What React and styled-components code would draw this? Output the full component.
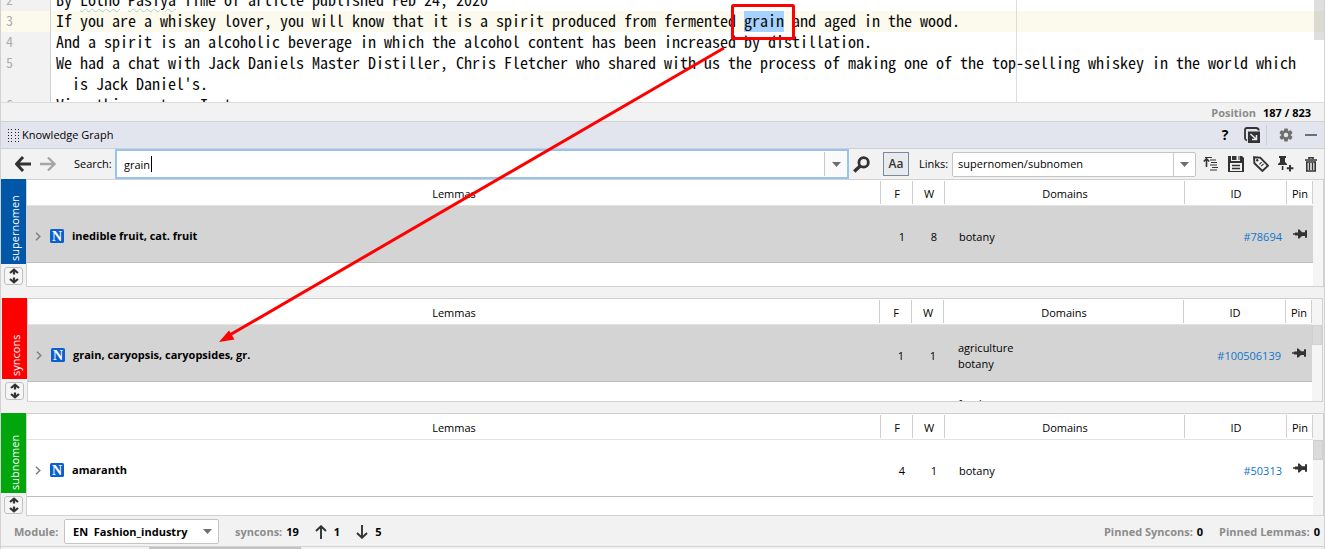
import React from "react";
import styled, { createGlobalStyle } from "styled-components";

const UI_FONT = '"Open Sans", "Noto Sans", sans-serif';
const MONO_FONT = '"Noto Sans Mono CJK SC", "Noto Sans Mono CJK JP", "DejaVu Sans Mono", monospace';
const LINE = "#d1d1d1";
const PANEL = "#f2f2f2";
const INK = "#333333";

const GlobalStyle = createGlobalStyle`
  * { box-sizing: border-box; }
  body {
    margin: 0;
    background: ${PANEL};
    color: #000;
    font: 11px/16px ${UI_FONT};
    overflow: hidden;
  }
  button, input, select { font: inherit; color: inherit; margin: 0; }
  svg { display: block; flex: none; }
`;

const Window = styled.main`
  position: relative;
  border: solid ${LINE};
  border-width: 0 1px;
`;

/* ---------- editor ---------- */

const Editor = styled.section`
  display: flex;
  height: 103px;
  overflow: hidden;
  background: #fff;
  border-bottom: 1px solid #dcdcdc;
  font: 16px/19px ${MONO_FONT};
`;

const Lines = styled.div`
  flex: 1;
  margin-top: -10px;
  min-width: 0;
`;

const Line = styled.div`
  display: flex;
  height: 21px;
  background: ${(p) => (p.$current ? "#fcfaed" : "transparent")};
`;

const LineNumber = styled.span`
  width: 50px;
  flex: none;
  padding-left: 5px;
  font-size: 14px;
  color: #adadad;
  background: ${(p) => (p.$current ? "transparent" : PANEL)};
  border-right: 1px solid ${LINE};
`;

const Code = styled.span`
  flex: 1;
  padding-left: ${(p) => (p.$wrapped ? 21 : 5)}px;
  white-space: pre;
  color: #080808;
`;

const Typo = styled.span`
  text-decoration: underline wavy #a9d3ae 1px;
  text-underline-offset: 2px;
`;

const Selected = styled.mark`
  display: inline-block;
  height: 21px;
  color: inherit;
  background: #a6d2ff;
`;

const MarginGuide = styled.div`
  position: absolute;
  left: 1015px;
  top: 0;
  width: 1px;
  height: 102px;
  background: #dcdcdc;
`;

const EditorScroll = styled.div`
  position: absolute;
  right: 0;
  top: 0;
  width: 10px;
  height: 40px;
  background: rgba(120, 120, 120, 0.24);
`;

const PositionBar = styled.div`
  display: flex;
  justify-content: flex-end;
  align-items: flex-end;
  gap: 7px;
  height: 18px;
  padding-right: 13px;
  font-weight: 700;
`;

const Muted = styled.span`
  color: #8c8c8c;
`;

/* ---------- tool window ---------- */

const TitleBar = styled.header`
  display: flex;
  align-items: center;
  height: 28px;
  padding: 0 7px;
  background: #e2e5ed;
  border: solid ${LINE};
  border-width: 1px 0;
`;

const Title = styled.h1`
  flex: 1;
  margin: 0 0 0 3px;
  font: inherit;
`;

const IconButton = styled.button`
  display: flex;
  align-items: center;
  justify-content: center;
  width: ${(p) => p.$w || 16}px;
  height: 20px;
  padding: 0;
  border: 0;
  background: none;
  font-weight: 700;
  font-size: 14px;
`;

const TitleActions = styled.div`
  display: flex;
  align-items: center;
  gap: 11px;
`;

const Divider = styled.span`
  width: 1px;
  height: 20px;
  margin-left: -5px;
  background: #cdcfd6;
`;

const Toolbar = styled.div`
  display: flex;
  align-items: center;
  height: 30px;
  padding: 0 5px 0 14px;
`;

const NavButtons = styled.div`
  display: flex;
  gap: 9px;
  margin-right: 18px;
`;

const FieldLabel = styled.label`
  width: ${(p) => p.$w}px;
  flex: none;
  white-space: nowrap;
  color: ${(p) => (p.$muted ? "#8c8c8c" : "inherit")};
`;

const SearchBox = styled.div`
  position: relative;
  display: flex;
  align-items: center;
  flex: 1;
  height: 30px;
  background: #fff;
  border: 2px solid #97c3f3;
`;

const SearchInput = styled.input`
  flex: 1;
  min-width: 0;
  height: 24px;
  padding: 0 7px;
  border: 0;
  outline: 0;
  background: none;
`;

const Caret = styled.span`
  position: absolute;
  left: 34px;
  top: 5px;
  width: 1px;
  height: 16px;
  background: #000;
`;

const DropButton = styled.button`
  display: flex;
  align-items: center;
  justify-content: center;
  width: 23px;
  height: 24px;
  padding: 0;
  border: 0;
  border-left: 1px solid #c9c9c9;
  background: #fafafa;
`;

const CaseButton = styled.button`
  width: 26px;
  height: 24px;
  margin: 0 10px 0 14px;
  padding: 0;
  border: 1px solid #7a8a9c;
  background: #e8ebee;
  color: #333;
  font-size: 12px;
  font-weight: 600;
  line-height: 20px;
`;

const SelectWrap = styled.div`
  position: relative;
  flex: none;
  width: ${(p) => p.$w}px;
  height: 25px;
  background: #fff;
  border: 1px solid #c4c4c4;
  border-radius: 2px;
`;

const Select = styled.select`
  appearance: none;
  width: 100%;
  height: 100%;
  padding: 0 26px 0 ${(p) => (p.$bold ? 8 : 5)}px;
  border: 0;
  outline: 0;
  background: transparent;
  font-weight: ${(p) => (p.$bold ? 700 : 400)};
`;

const SelectArrow = styled.span`
  position: absolute;
  right: 0;
  top: 0;
  display: flex;
  align-items: center;
  justify-content: center;
  width: 22px;
  height: 100%;
  pointer-events: none;
  border-left: ${(p) => (p.$divided ? "1px solid #c9c9c9" : "0")};
`;

const Actions = styled.div`
  display: flex;
  gap: 9px;
  margin-left: ${(p) => p.$ml || 7}px;
`;

/* ---------- result groups ---------- */

const Group = styled.section`
  display: flex;
  height: ${(p) => p.$h}px;
  margin: 0 ${(p) => (p.$inset ? 1 : 0)}px 11px;

  &:last-of-type { margin-bottom: 0; }
`;

const Side = styled.div`
  display: flex;
  flex-direction: column;
  align-items: center;
  gap: 3px;
  width: 25px;
  padding-bottom: 2px;
`;

const GroupName = styled.h2`
  flex: 1;
  width: 25px;
  margin: 0;
  padding: 3px 5px 0 0;
  background: ${(p) => p.$color};
  color: #fff;
  font: 11px/18px ${UI_FONT};
  writing-mode: vertical-rl;
  transform: rotate(180deg);
`;

const ExpandButton = styled.button`
  display: flex;
  align-items: center;
  justify-content: center;
  width: 19px;
  height: 18px;
  padding: 0;
  border: 1px solid #c0c0c0;
  border-radius: 3px;
  background: #f5f5f5;
`;

const Frame = styled.div`
  display: flex;
  flex: 1;
  min-width: 0;
  overflow: hidden;
  background: #fff;
  border: 1px solid ${LINE};
`;

const Table = styled.table`
  flex: 1;
  width: 100%;
  height: 0;
  table-layout: fixed;
  border-collapse: separate;
  border-spacing: 0;
`;

const HeadRow = styled.tr`
  height: 26px;
`;

const Head = styled.th`
  padding: 2px 0 0;
  border-bottom: 1px solid #e2e2e2;
  background: linear-gradient(#cfcfcf, #cfcfcf) right top 1px / 1px 23px no-repeat;
  font-weight: 400;
`;

const Row = styled.tr`
  height: 57px;
  background: ${(p) => (p.$selected ? "#d4d4d4" : "#fff")};
`;

const Cell = styled.td`
  padding: ${(p) => p.$pad || "6px 8px 0 0"};
  text-align: ${(p) => p.$align || "right"};
  border-bottom: 1px solid #bdbdbd;
  vertical-align: middle;
`;

const Lemma = styled.div`
  display: flex;
  align-items: center;
  font-weight: 700;
`;

const BadgeSlot = styled.span`
  margin: 0 8px 0 9px;
`;

const IdLink = styled.a`
  color: #0f75c8;
  text-decoration: none;
`;

const Track = styled.div`
  width: 10px;
  flex: none;
  padding-top: 26px;
  background: #f5f5f5;
`;

const Thumb = styled.div`
  height: 20px;
  background: #dadada;
  border: 1px solid #d0d0d0;
`;

/* ---------- footer ---------- */

const Footer = styled.footer`
  display: flex;
  align-items: center;
  height: 31px;
  padding: 1px 4px 0 13px;
  border-bottom: 1px solid ${LINE};
  font-weight: 700;
`;

const Stat = styled.span`
  display: flex;
  align-items: center;
  gap: ${(p) => p.$gap || 4}px;
  margin-left: 16px;
`;

const Spacer = styled.span`
  flex: 1;
`;

const BottomScroll = styled.div`
  width: 152px;
  height: 3px;
  margin-left: 148px;
  background: #c2c2c2;
`;

const Annotation = styled.svg`
  position: absolute;
  left: -1px;
  top: 0;
  pointer-events: none;
`;

/* ---------- icons ---------- */

const BackArrow = () => (
  <svg width="16" height="16" fill="none" stroke={INK} strokeWidth="3">
    <path d="M16 8H2M8 1L1.5 8L8 15" />
  </svg>
);

const ForwardArrow = () => (
  <svg width="16" height="16" fill="none" stroke="#a6a6a6" strokeWidth="2.4">
    <path d="M0 8H14M8 1.5L14.5 8L8 14.5" />
  </svg>
);

const Triangle = () => (
  <svg width="9" height="5">
    <path d="M0 0H9L4.5 5Z" fill="#6e6e6e" />
  </svg>
);

const Grip = () => (
  <svg width="11" height="13" stroke="#222" strokeWidth="1" strokeDasharray="1 2">
    <path d="M.5 0V13M3.5 0V13M7.5 0V13M10.5 0V13" />
  </svg>
);

const Magnifier = () => (
  <svg width="17" height="17" fill="none" stroke={INK}>
    <circle cx="10.6" cy="6.4" r="4.7" strokeWidth="2.8" />
    <path d="M7.2 10L1.2 15.6" strokeWidth="3.4" />
  </svg>
);

const PopOut = () => (
  <svg width="16" height="16" fill="none">
    <path d="M3 13.5Q1 13 1 11V3Q1 1 3 1H12Q14.5 1 14.8 3.5" stroke={INK} strokeWidth="1.8" />
    <path d="M4 4.5H16V16H4Z" fill={INK} />
    <path d="M6.5 7L12 12M12.5 8V12.5H8" stroke="#e8eaf0" strokeWidth="1.5" />
  </svg>
);

const Gear = () => (
  <svg width="14" height="14" viewBox="-7 -7 14 14">
    <circle r="3.5" fill="none" stroke="#6e6e6e" strokeWidth="2.4" />
    {[0, 60, 120, 180, 240, 300].map((a) => (
      <path key={a} d="M-1.6 -6.6H1.6L2.2 -4H-2.2Z" fill="#6e6e6e" transform={`rotate(${a})`} />
    ))}
  </svg>
);

const Minus = () => (
  <svg width="12" height="2">
    <path d="M0 0H12V2H0Z" fill="#6e6e6e" />
  </svg>
);

const SortTree = () => (
  <svg width="16" height="14" fill="none" stroke={INK}>
    <path d="M3.5 10V2M.8 4.5L3.5 1.6L6.2 4.5" strokeWidth="1.6" />
    <path d="M2 .5H9M7 3H13M8 5.5H14M7 8H14M9 10.5H15M7 13H14" strokeWidth="1.1" />
  </svg>
);

const Save = () => (
  <svg width="16" height="16">
    <path d="M0 0H3V5H12V0H14L16 2V16H0Z" fill={INK} />
    <path d="M4 0H8.5V4H4ZM10.5 0H11.5V4H10.5Z" fill={INK} />
    <path d="M2 7H14V15H2Z" fill="#f2f2f2" />
    <path d="M4 9.5H12M4 12.5H12" stroke={INK} strokeWidth="1.4" />
  </svg>
);

const Tag = () => (
  <svg width="16" height="16" fill="none" stroke={INK}>
    <path d="M1 1.2L7.2 1.6L15 9.6L9.4 15L1.4 7.2Z" strokeWidth="1.9" />
    <circle cx="4.2" cy="4.2" r="1.2" fill={INK} stroke="none" />
    <path d="M6.4 8.4L8.6 6.2M8.2 10.2L10.6 7.8" strokeWidth="1.1" />
  </svg>
);

const PinAdd = () => (
  <svg width="16" height="16">
    <path d="M1 0H8V2H7V6L9 8V9H0V8L2 6V2H1ZM3.8 10H5.4V14H3.8Z" fill={INK} />
    <path d="M11 9H13V11.2H15.4V13.2H13V15.6H11V13.2H8.8V11.2H11Z" fill={INK} />
  </svg>
);

const Trash = () => (
  <svg width="12" height="15" fill="none" stroke={INK}>
    <path d="M4 2V.8H8V2M0 3H12" strokeWidth="1.6" />
    <path d="M1.8 5V14H10.2V5Z" strokeWidth="1.6" />
    <path d="M4.5 6V13M7.5 6V13" strokeWidth="1.4" />
  </svg>
);

const UpDown = () => (
  <svg width="10" height="16" fill="none" stroke={INK} strokeWidth="2.2">
    <path d="M5 1.5V6.5M1 5L5 1.6L9 5M5 9.5V14.5M1 11L5 14.4L9 11" />
  </svg>
);

const Chevron = () => (
  <svg width="6" height="9" fill="none" stroke="#7f7f7f" strokeWidth="1.5">
    <path d="M1 .8L4.8 4.5L1 8.2" />
  </svg>
);

const NounBadge = () => (
  <svg width="14" height="14">
    <rect width="14" height="14" rx="1.5" fill="#0b5fcf" />
    <text x="7" y="12" textAnchor="middle" fill="#fff" fontFamily="Liberation Serif, serif" fontWeight="700" fontSize="14">N</text>
  </svg>
);

const Pin = () => (
  <svg width="14" height="10">
    <path d="M0 4.3H5V5.7H0ZM2 3.5H5V6.5H2ZM5 .5H6.4L9 3.2H12V1.2H14V8.8H12V7H9L6.4 9.5H5Z" fill={INK} />
  </svg>
);

const StatArrow = ({ down }) => (
  <svg width="12" height="14" fill="none" stroke={INK} strokeWidth="1.9">
    <path d={down ? "M6 0V13M1 8L6 12.8L11 8" : "M6 14V1M1 6L6 1.2L11 6"} />
  </svg>
);

/* ---------- data ---------- */

const CODE = [
  { n: 2, text: <>By <Typo>Lotho</Typo> <Typo>Pasiya</Typo> Time of article published Feb 24, 2020</> },
  {
    n: 3,
    current: true,
    text: <>If you are a whiskey lover, you will know that it is a spirit produced from fermented <Selected>grain</Selected> and aged in the wood.</>,
  },
  { n: 4, text: "And a spirit is an alcoholic beverage in which the alcohol content has been increased by distillation." },
  { n: 5, text: "We had a chat with Jack Daniels Master Distiller, Chris Fletcher who shared with us the process of making one of the top-selling whiskey in the world which" },
  { wrapped: true, text: "is Jack Daniel's." },
  { n: 6, text: "View this post on Instagram" },
];

const GROUPS = [
  {
    name: "supernomen", color: "#0056a7", height: 108,
    row: { lemma: "inedible fruit, cat. fruit", f: 1, w: 8, domains: ["botany"], id: "#78694", selected: true },
  },
  {
    name: "syncons", color: "#ff0000", height: 104, inset: true, thumb: true, next: "food",
    row: { lemma: "grain, caryopsis, caryopsides, gr.", f: 1, w: 1, domains: ["agriculture", "botany"], id: "#100506139", selected: true },
  },
  {
    name: "subnomen", color: "#00a60c", height: 103, thumb: true,
    row: { lemma: "amaranth", f: 4, w: 1, domains: ["botany"], id: "#50313" },
  },
];

function ResultGroup({ name, color, height, inset, thumb, next, row }) {
  return (
    <Group $h={height} $inset={inset}>
      <Side>
        <GroupName $color={color}>{name}</GroupName>
        <ExpandButton aria-label={`Resize ${name}`}><UpDown /></ExpandButton>
      </Side>
      <Frame>
        <Table>
          <colgroup>
            <col />
            <col width="32" />
            <col width="32" />
            <col width="240" />
            <col width="102" />
            <col width="26" />
          </colgroup>
          <thead>
            <HeadRow>
              {["Lemmas", "F", "W", "Domains", "ID", "Pin"].map((h) => <Head key={h}>{h}</Head>)}
            </HeadRow>
          </thead>
          <tbody>
            <Row $selected={row.selected}>
              <Cell $align="left" $pad="4px 0 0 8px">
                <Lemma>
                  <Chevron />
                  <BadgeSlot><NounBadge /></BadgeSlot>
                  <span>{row.lemma}</span>
                </Lemma>
              </Cell>
              <Cell>{row.f}</Cell>
              <Cell>{row.w}</Cell>
              <Cell $align="left" $pad="6px 0 0 14px">{row.domains.map((d) => <div key={d}>{d}</div>)}</Cell>
              <Cell $pad="6px 5px 0 0"><IdLink href={row.id}>{row.id}</IdLink></Cell>
              <Cell $align="left" $pad="0 0 0 6px"><Pin /></Cell>
            </Row>
            {next && (
              <tr>
                <td colSpan={3} />
                <Cell $align="left" $pad="14px 0 0 14px">{next}</Cell>
              </tr>
            )}
          </tbody>
        </Table>
        <Track>{thumb && <Thumb />}</Track>
      </Frame>
    </Group>
  );
}

export default function App() {
  return (
    <>
      <GlobalStyle />
      <Window>
        <Editor>
          <Lines>
            {CODE.map((l, i) => (
              <Line key={i} $current={l.current}>
                <LineNumber $current={l.current}>{l.n}</LineNumber>
                <Code $wrapped={l.wrapped}>{l.text}</Code>
              </Line>
            ))}
          </Lines>
          <MarginGuide />
          <EditorScroll />
        </Editor>
        <PositionBar><Muted>Position</Muted><span>187 / 823</span></PositionBar>

        <TitleBar>
          <Grip />
          <Title>Knowledge Graph</Title>
          <TitleActions>
            <IconButton aria-label="Help">?</IconButton>
            <IconButton aria-label="Detach"><PopOut /></IconButton>
            <Divider />
            <IconButton aria-label="Settings"><Gear /></IconButton>
            <IconButton aria-label="Hide" $w={12}><Minus /></IconButton>
          </TitleActions>
        </TitleBar>

        <Toolbar>
          <NavButtons>
            <IconButton aria-label="Back"><BackArrow /></IconButton>
            <IconButton aria-label="Forward"><ForwardArrow /></IconButton>
          </NavButtons>
          <FieldLabel htmlFor="search" $w={41}>Search:</FieldLabel>
          <SearchBox>
            <SearchInput id="search" defaultValue="grain" />
            <Caret />
            <DropButton aria-label="Search history"><Triangle /></DropButton>
          </SearchBox>
          <Actions $ml={4}>
            <IconButton aria-label="Find"><Magnifier /></IconButton>
          </Actions>
          <CaseButton>Aa</CaseButton>
          <FieldLabel htmlFor="links" $w={33}>Links:</FieldLabel>
          <SelectWrap $w={244}>
            <Select id="links"><option>supernomen/subnomen</option></Select>
            <SelectArrow $divided><Triangle /></SelectArrow>
          </SelectWrap>
          <Actions>
            <IconButton aria-label="Sort"><SortTree /></IconButton>
            <IconButton aria-label="Save"><Save /></IconButton>
            <IconButton aria-label="Tag"><Tag /></IconButton>
            <IconButton aria-label="Pin"><PinAdd /></IconButton>
            <IconButton aria-label="Delete"><Trash /></IconButton>
          </Actions>
        </Toolbar>

        {GROUPS.map((g) => (
          <ResultGroup key={g.name} {...g} />
        ))}

        <Footer>
          <FieldLabel htmlFor="module" $w={50} $muted>Module:</FieldLabel>
          <SelectWrap $w={155}>
            <Select id="module" $bold><option>EN&nbsp; Fashion_industry</option></Select>
            <SelectArrow><Triangle /></SelectArrow>
          </SelectWrap>
          <Stat><Muted>syncons:</Muted>19</Stat>
          <Stat $gap={7}><StatArrow />1</Stat>
          <Stat $gap={7}><StatArrow down />5</Stat>
          <Spacer />
          <Stat><Muted>Pinned Syncons:</Muted>0</Stat>
          <Stat><Muted>Pinned Lemmas:</Muted>0</Stat>
        </Footer>
        <BottomScroll />

        <Annotation width="820" height="360" aria-hidden="true">
          <rect x="732.5" y="5.5" width="61" height="33" rx="1" fill="none" stroke="#f00" strokeWidth="3" />
          <path d="M724 48L228 336" stroke="#f00" strokeWidth="3" />
          <path d="M219 342L229 330.5L234.5 339.5Z" fill="#f00" />
        </Annotation>
      </Window>
    </>
  );
}
